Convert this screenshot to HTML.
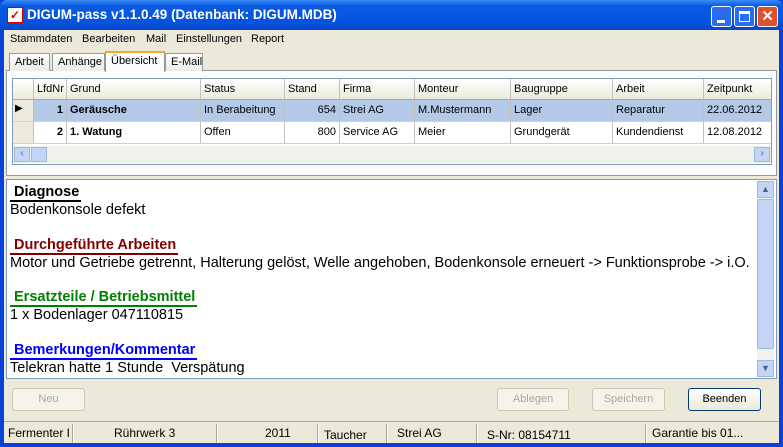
<!DOCTYPE html>
<html><head><style>
*{box-sizing:border-box;margin:0;padding:0}
body{width:783px;height:447px;overflow:hidden;font-family:"Liberation Sans",Arial,sans-serif;font-size:11px;background:#0842d8;position:relative}
.a{position:absolute}
.title{left:0;top:0;width:783px;height:30px;background:linear-gradient(#3a8cf8,#0a5ae0 20%,#0554e0 70%,#0846c8);border-radius:7px 7px 0 0;color:#fff;font-weight:bold;font-size:13.5px}
.client{left:4px;top:30px;width:775px;height:413px;background:#ece9d8}
.menu span{position:absolute;top:33px;font-size:11px}
.tab{position:absolute;top:53px;height:18px;border:1px solid #919b9c;border-bottom:none;background:linear-gradient(#fff,#ecebe5);padding:2px 5px;font-size:11px;white-space:nowrap}
.grid{left:12px;top:78px;width:760px;height:87px;border:1px solid #7f9db9;background:#fff;overflow:hidden}
.c{position:absolute;height:100%;padding:4px 3px;white-space:nowrap;border-right:1px solid #c0c0c0;overflow:hidden}
.row{position:absolute;left:0;width:760px;height:22px}
.hdr{background:linear-gradient(#fff,#ebeadb);border-bottom:1px solid #aca899}
.btn{position:absolute;top:388px;height:23px;border:1px solid #c9c7ba;border-radius:3px;background:#f5f4ea;color:#aca899;text-align:center;line-height:21px;font-size:11px}
.rt{left:6px;top:179px;width:771px;height:200px;background:#fff;border:1px solid #7f9db9;font-family:"Liberation Sans",Arial,sans-serif;font-size:14.5px;line-height:17.3px}
.h{font-weight:bold;display:inline-block;border-bottom:2px solid;padding:0 2px 0 4px;line-height:15px}
.sb span{position:absolute;top:426px;font-size:12px;white-space:nowrap}
.sep{position:absolute;top:424px;width:2px;height:19px;border-left:1px solid #aca899;border-right:1px solid #fff}
</style></head><body>
<div class="a title">
 <div class="a" style="left:7px;top:7px;width:16px;height:16px;background:#fff;border:1px solid #c00;color:#d00;font-size:12px;line-height:14px;text-align:center">✓</div>
 <div class="a" style="left:27px;top:7px">DIGUM-pass v1.1.0.49 (Datenbank: DIGUM.MDB)</div>
 <div class="a" style="left:711px;top:6px;width:21px;height:21px;border:1px solid #fff;border-radius:3px;background:#2a6cf0"><div class="a" style="left:5px;top:13px;width:8px;height:3px;background:#fff"></div></div>
 <div class="a" style="left:734px;top:6px;width:21px;height:21px;border:1px solid #fff;border-radius:3px;background:#2a6cf0"><div class="a" style="left:4px;top:4px;width:11px;height:11px;border:1px solid #fff;border-top-width:3px"></div></div>
 <div class="a" style="left:757px;top:6px;width:21px;height:21px;border:1px solid #fff;border-radius:3px;background:#e0502a;text-align:center;line-height:19px;font-size:15px">✕</div>
</div>
<div class="a client"></div>
<div class="menu"><span style="left:10px">Stammdaten</span><span style="left:82px">Bearbeiten</span><span style="left:146px">Mail</span><span style="left:176px">Einstellungen</span><span style="left:251px">Report</span></div>
<div class="a" style="left:6px;top:70px;width:771px;height:106px;border:1px solid #919b9c;background:#fcfcfe"></div>
<div class="tab" style="left:9px;width:41px">Arbeit</div>
<div class="tab" style="left:52px;width:53px">Anhänge</div>
<div class="tab" style="left:105px;top:51px;height:21px;width:60px;background:#fcfcfe;border-top:2px solid #f5a830">Übersicht</div>
<div class="tab" style="left:165px;width:38px">E-Mail</div>
<div class="a grid">
 <div class="row hdr" style="top:0;height:21px">
  <div class="c" style="left:0;width:21px;background:linear-gradient(#fff,#ebeadb)"></div>
  <div class="c" style="left:21px;width:33px">LfdNr</div>
  <div class="c" style="left:54px;width:134px">Grund</div>
  <div class="c" style="left:188px;width:84px">Status</div>
  <div class="c" style="left:272px;width:55px">Stand</div>
  <div class="c" style="left:327px;width:75px">Firma</div>
  <div class="c" style="left:402px;width:96px">Monteur</div>
  <div class="c" style="left:498px;width:102px">Baugruppe</div>
  <div class="c" style="left:600px;width:91px">Arbeit</div>
  <div class="c" style="left:691px;width:68px">Zeitpunkt</div>
 </div>
 <div class="row" style="top:21px;background:#b4c8e8;border-bottom:1px solid #d0d0d0">
  <div class="c" style="left:0;width:21px;background:#ebeadb;font-size:10px;padding:3px 2px">▶</div>
  <div class="c" style="left:21px;width:33px;text-align:right;font-weight:bold">1</div>
  <div class="c" style="left:54px;width:134px;font-weight:bold">Geräusche</div>
  <div class="c" style="left:188px;width:84px">In Berabeitung</div>
  <div class="c" style="left:272px;width:55px;text-align:right">654</div>
  <div class="c" style="left:327px;width:75px">Strei AG</div>
  <div class="c" style="left:402px;width:96px">M.Mustermann</div>
  <div class="c" style="left:498px;width:102px">Lager</div>
  <div class="c" style="left:600px;width:91px">Reparatur</div>
  <div class="c" style="left:691px;width:68px">22.06.2012</div>
 </div>
 <div class="row" style="top:43px;border-bottom:1px solid #d0d0d0">
  <div class="c" style="left:0;width:21px;background:#ebeadb"></div>
  <div class="c" style="left:21px;width:33px;text-align:right;font-weight:bold">2</div>
  <div class="c" style="left:54px;width:134px;font-weight:bold">1. Watung</div>
  <div class="c" style="left:188px;width:84px">Offen</div>
  <div class="c" style="left:272px;width:55px;text-align:right">800</div>
  <div class="c" style="left:327px;width:75px">Service AG</div>
  <div class="c" style="left:402px;width:96px">Meier</div>
  <div class="c" style="left:498px;width:102px">Grundgerät</div>
  <div class="c" style="left:600px;width:91px">Kundendienst</div>
  <div class="c" style="left:691px;width:68px">12.08.2012</div>
 </div>
 <div class="row" style="top:67px;height:17px;background:#eef1ea">
  <div class="a" style="left:1px;top:1px;width:16px;height:15px;background:#c4d4f4;border:1px solid #a0b8e0;color:#4d6185;font-size:10px;text-align:center">‹</div>
  <div class="a" style="left:18px;top:1px;width:16px;height:15px;background:#c4d4f4;border:1px solid #a0b8e0"></div>
  <div class="a" style="left:741px;top:1px;width:16px;height:15px;background:#c4d4f4;border:1px solid #a0b8e0;color:#4d6185;font-size:10px;text-align:center">›</div>
 </div>
</div>
<div class="a rt">
 <div class="a" style="left:3px;top:4px">
  <div class="h" style="color:#000">Diagnose</div><div>Bodenkonsole defekt</div><div>&nbsp;</div>
  <div class="h" style="color:#800000">Durchgeführte Arbeiten</div><div>Motor und Getriebe getrennt, Halterung gelöst, Welle angehoben, Bodenkonsole erneuert -&gt; Funktionsprobe -&gt; i.O.</div><div>&nbsp;</div>
  <div class="h" style="color:#008000">Ersatzteile / Betriebsmittel</div><div>1 x Bodenlager 047110815</div><div>&nbsp;</div>
  <div class="h" style="color:#0000ff">Bemerkungen/Kommentar</div><div>Telekran hatte 1 Stunde&nbsp; Verspätung</div>
 </div>
 <div class="a" style="left:750px;top:1px;width:17px;height:196px;background:#f3f1ec">
  <div class="a" style="left:0;top:0;width:17px;height:17px;background:#c4d4f4;border:1px solid #a0b8e0;color:#4d6185;font-size:9px;text-align:center;line-height:14px">▲</div>
  <div class="a" style="left:0;top:18px;width:17px;height:150px;background:#c4d4f4;border:1px solid #a0b8e0;border-radius:2px"></div>
  <div class="a" style="left:0;top:179px;width:17px;height:17px;background:#c4d4f4;border:1px solid #a0b8e0;color:#4d6185;font-size:9px;text-align:center;line-height:14px">▼</div>
 </div>
</div>
<div class="btn" style="left:12px;width:73px">Neu</div>
<div class="btn" style="left:497px;width:72px">Ablegen</div>
<div class="btn" style="left:592px;width:73px">Speichern</div>
<div class="btn" style="left:688px;width:73px;border-color:#003c74;color:#000;background:linear-gradient(#fff,#ece9d8)">Beenden</div>
<div class="a" style="left:4px;top:421px;width:775px;height:1px;background:#aca899"></div>
<div class="sb"><span style="left:8px">Fermenter I</span><span style="left:114px">Rührwerk 3</span><span style="left:265px">2011</span><span style="left:324px;top:428px">Taucher</span><span style="left:397px">Strei AG</span><span style="left:487px;top:428px">S-Nr: 08154711</span><span style="left:652px">Garantie bis 01...</span></div>
<div class="sep" style="left:72px"></div><div class="sep" style="left:216px"></div><div class="sep" style="left:317px"></div><div class="sep" style="left:386px"></div><div class="sep" style="left:476px"></div><div class="sep" style="left:645px"></div>
</body></html>
